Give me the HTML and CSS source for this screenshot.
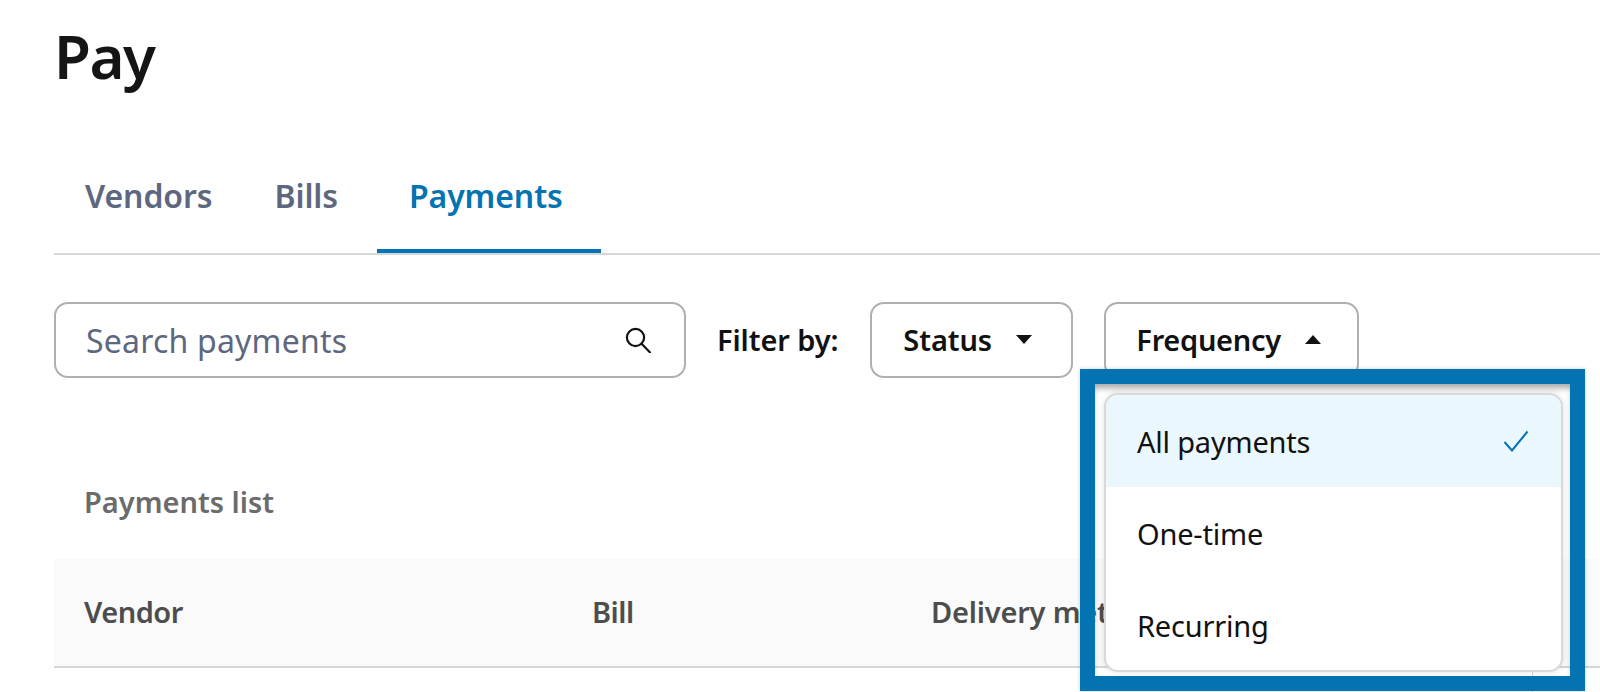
FILE: index.html
```html
<!DOCTYPE html>
<html lang="en">
<head>
  <meta charset="UTF-8" />
  <title>Pay</title>
  <link rel="stylesheet" href="styles.css">
</head>
<body>
  <div class="page">
    <h1 class="title">Pay</h1>

    <div class="tabs">
      <span class="tab">Vendors</span>
      <span class="tab">Bills</span>
      <span class="tab active">Payments</span>
    </div>

    <div class="filters">
      <div class="search">
        <span class="search-text">Search payments</span>
        <svg class="search-icon" viewBox="0 0 26 26" width="26" height="26" fill="none" stroke="#111" stroke-width="2.2">
          <circle cx="10.5" cy="10.5" r="8.6" />
          <path d="M16.6 16.8L25 25.4" stroke-linecap="round" />
        </svg>
      </div>
      <span class="filter-label">Filter by:</span>
      <div class="filter-btn status-btn">Status <span class="caret down"></span></div>
      <div class="filter-btn freq-btn">Frequency <span class="caret up"></span></div>
    </div>

    <h2 class="list-title">Payments list</h2>

    <div class="table-head">
      <span class="col col-vendor">Vendor</span>
      <span class="col col-bill">Bill</span>
      <span class="col col-delivery">Delivery method</span>
    </div>
    <div class="table-row"></div>
  </div>

  <!-- blue callout over the open Frequency menu, page shows through the gap -->
  <div class="callout">
    <div class="menu">
      <div class="option selected">
        All payments
        <svg viewBox="0 0 26 22" width="26" height="22" fill="none" stroke="#0373b1" stroke-width="2">
          <path d="M1.5 12L9 20.5L24.5 1.5" />
        </svg>
      </div>
      <div class="option">One-time</div>
      <div class="option">Recurring</div>
    </div>
  </div>
</body>
</html>
```

FILE: styles.css
```css
html, body {
  margin: 0;
  height: 692px;
  overflow: hidden;
}

body {
  font-family: "Noto Sans", sans-serif;
  background-color: #ffffff;
  position: relative;
}

.page {
  padding-left: 54px;
}

.title {
  margin: 0;
  padding-top: 14px;
  height: 94px;
  font-size: 60px;
  line-height: 84px;
  font-weight: 600;
  color: #151515;
  letter-spacing: -1.5px;
}

.tabs {
  display: flex;
  margin-top: 55px;
  height: 90px;
  border-bottom: 2px solid #d4d7dc;
}

.tab {
  padding: 0 30px 0 31px;
  line-height: 66px;
  font-size: 32px;
  font-weight: 600;
  color: #5d6880;
  letter-spacing: -0.1px;
}

.tab:nth-child(2) {
  padding: 0 39px 0 32px;
}

.tab.active {
  padding: 0 38px 0 32px;
  color: #0373b1;
  border-bottom: 4px solid #0373b1;
}

.filters {
  display: flex;
  align-items: center;
  margin-top: 47px;
  height: 76px;
}

.search {
  width: 632px;
  height: 76px;
  box-sizing: border-box;
  border: 2px solid #adb0b3;
  border-radius: 14px;
  display: flex;
  align-items: center;
  justify-content: space-between;
  padding: 0 33px 0 30px;
}

.search-text {
  font-size: 32px;
  color: #5d6880;
  letter-spacing: 0.2px;
}

.filter-label {
  margin-left: 31px;
  padding-bottom: 2px;
  font-size: 29px;
  font-weight: 600;
  color: #111;
  letter-spacing: -0.1px;
}

.filter-btn {
  height: 76px;
  box-sizing: border-box;
  border: 2px solid #adb0b3;
  border-radius: 14px;
  background-color: #ffffff;
  display: flex;
  align-items: center;
  padding-bottom: 2px;
  font-size: 29px;
  font-weight: 600;
  color: #111;
  letter-spacing: -0.1px;
}

.status-btn {
  width: 203px;
  margin-left: 32px;
  padding-left: 31px;
}

.freq-btn {
  width: 255px;
  margin-left: 31px;
  padding-left: 30px;
  letter-spacing: -0.3px;
}

.caret {
  width: 0;
  height: 0;
  margin-left: 24px;
  border-left: 8px solid transparent;
  border-right: 8px solid transparent;
}

.caret.down {
  border-top: 9px solid #111;
}

.caret.up {
  border-bottom: 9px solid #111;
}

.list-title {
  margin: 104px 0 0 30px;
  height: 77px;
  font-size: 29px;
  line-height: 40px;
  font-weight: 600;
  color: #6b6b6b;
}

.table-head {
  display: flex;
  align-items: center;
  height: 105px;
  padding: 0 0 2px 30px;
  background-color: #fafafa;
  border-bottom: 2px solid #d6d6d6;
  font-size: 29px;
  font-weight: 600;
  color: #4d4d4d;
  letter-spacing: -0.5px;
}

.col-vendor {
  width: 508px;
}

.col-bill {
  width: 339px;
}

.col-delivery {
  letter-spacing: -0.2px;
}

.table-row {
  width: 1478px;
  height: 40px;
  border-right: 1px solid #d6d6d6;
}

.callout {
  position: absolute;
  left: 1080px;
  top: 369px;
  width: 505px;
  height: 322px;
  box-sizing: border-box;
  border: 15px solid #0373b1;
  padding: 9px 7px 4px 9px;
  box-shadow: inset 0 6px 6px -2px rgba(0, 0, 0, 0.35), 0 0 4px rgba(0, 0, 0, 0.2);
}

.menu {
  height: 100%;
  box-sizing: border-box;
  background-color: #ffffff;
  border: 2px solid #d9d9d9;
  border-radius: 14px;
  box-shadow: 0 0 6px rgba(0, 0, 0, 0.12);
  overflow: hidden;
}

.option {
  height: 92px;
  display: flex;
  align-items: center;
  justify-content: space-between;
  padding: 0 32px 0 31px;
  font-size: 29px;
  color: #111;
  letter-spacing: -0.2px;
}

.option.selected {
  background-color: #eaf7fd;
}
```
